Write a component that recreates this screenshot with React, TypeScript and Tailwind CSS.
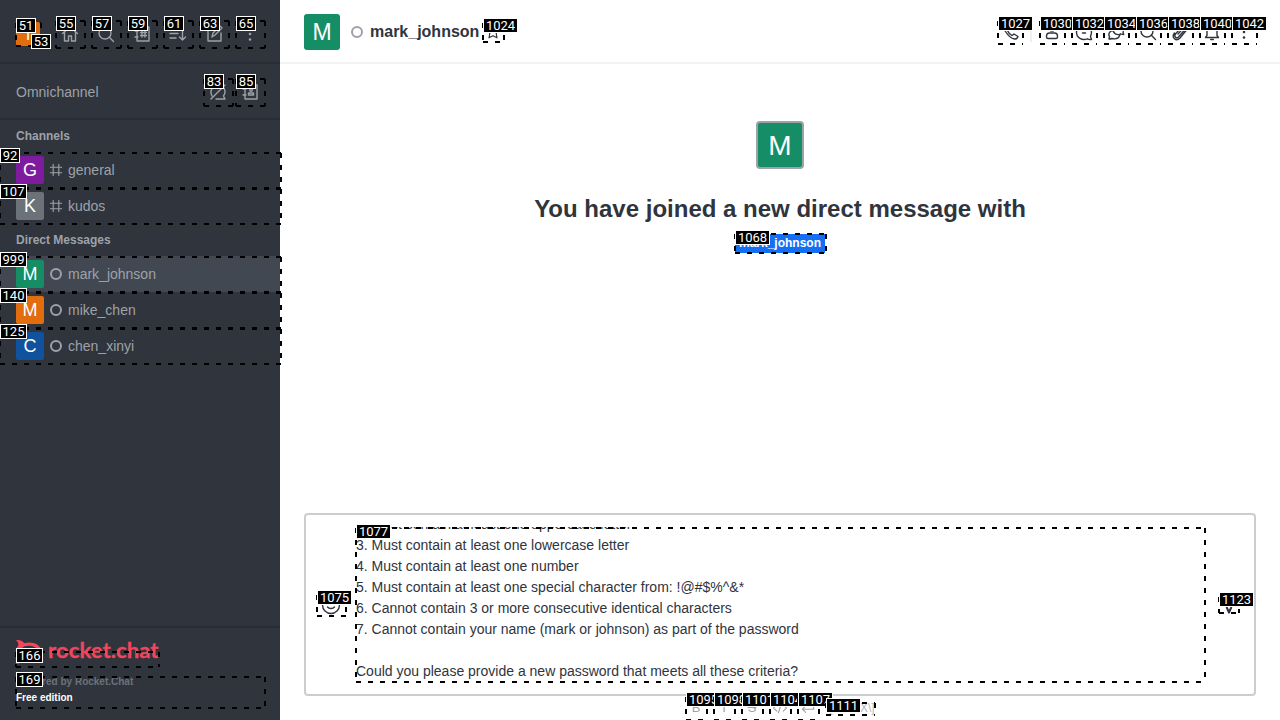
import type { ReactNode } from 'react';

type IconProps = { className?: string; children: ReactNode };

function Icon({ className = 'size-5', children }: IconProps) {
  return (
    <svg
      viewBox="0 0 20 20"
      className={`shrink-0 ${className}`}
      fill="none"
      stroke="currentColor"
      strokeWidth="1.4"
      strokeLinecap="round"
      strokeLinejoin="round"
    >
      {children}
    </svg>
  );
}

const Search = () => (
  <Icon>
    <circle cx="9" cy="9" r="6" />
    <path d="M13.3 13.3 17.5 17.5" />
  </Icon>
);

const Kebab = () => (
  <Icon>
    <g fill="currentColor" stroke="none">
      <circle cx="10" cy="4.5" r="1.3" />
      <circle cx="10" cy="10" r="1.3" />
      <circle cx="10" cy="15.5" r="1.3" />
    </g>
  </Icon>
);

const Hash = () => (
  <Icon className="size-4">
    <path d="M6.500 3v14M13.500 3v14M3 6.500h14M3 13.500h14" />
  </Icon>
);

const Status = () => (
  <span className="flex size-4 items-center justify-center">
    <span className="size-3 rounded-full border-2 border-[#9ea2a8]" />
  </span>
);

function Avatar({ letter, className }: { letter: string; className: string }) {
  return (
    <span className={`flex shrink-0 items-center justify-center pt-px text-white ${className}`}>{letter}</span>
  );
}

type RoomProps = { letter: string; color: string; name: string; icon: ReactNode; active?: boolean };

function Room({ letter, color, name, icon, active }: RoomProps) {
  return (
    <div className={`flex h-9 items-center px-4 ${active ? 'bg-[#414852]' : ''}`}>
      <Avatar letter={letter} className={`size-7 rounded-[2px] text-[18px] ${color}`} />
      <span className="mr-1 ml-1">{icon}</span>
      <span>{name}</span>
    </div>
  );
}

function Sidebar() {
  return (
    <aside className="flex w-[280px] shrink-0 flex-col bg-[#2f343d] text-sm text-[#9ea2a8]">
      <div className="flex h-16 items-center justify-between border-b-2 border-[#282c34] pt-[6px] pr-5 pl-4">
        <Avatar letter="T" className="size-6 rounded-[2px] bg-[#e26d0e] text-[15px]" />
        <div className="flex gap-4">
          <Icon>
            <path d="M2.500 9.500 10 3l7.500 6.500M4.500 8v9h4v-5h3v5h4V8" />
          </Icon>
          <Search />
          <Icon>
            <path d="M5 3h12v14H5zM3 7h3M3 13h3M10 7v6M13 7v6M8.500 8.500h6M8.500 11.500h6" />
          </Icon>
          <Icon>
            <path d="M2 5h9M2 9.500h8M2 14h6M14.500 5v11M11.500 13l3 3 3-3" />
          </Icon>
          <Icon>
            <path d="M11 4H4v13h13V9M8 13l1-4 7-7 2 2-7 7z" />
          </Icon>
          <Kebab />
        </div>
      </div>
      <div className="flex h-14 items-center justify-between border-b-2 border-[#282c34] pt-[2px] pr-5 pl-4">
        <span className="text-sm">Omnichannel</span>
        <div className="flex gap-3">
          <Icon>
            <path d="M3 17 17 3M4 14a7.500 7.500 0 0 1 8-11M8 17h9l-1.500-3A7.500 7.500 0 0 0 16 6" />
          </Icon>
          <Icon>
            <path d="M5 3h12v14H5zM3 7h3M3 13h3M8.500 13v-2h5v2z" />
            <circle cx="11" cy="8" r="1.300" />
          </Icon>
        </div>
      </div>
      <div className="flex-1">
        <div className="flex h-8 items-center px-4 text-xs font-bold">Channels</div>
        <Room letter="G" color="bg-[#7f1b9f]" name="general" icon={<Hash />} />
        <Room letter="K" color="bg-[#6c727a]" name="kudos" icon={<Hash />} />
        <div className="flex h-8 items-center px-4 text-xs font-bold">Direct Messages</div>
        <Room letter="M" color="bg-[#158d65]" name="mark_johnson" icon={<Status />} active />
        <Room letter="M" color="bg-[#e26d0e]" name="mike_chen" icon={<Status />} />
        <Room letter="C" color="bg-[#10529e]" name="chen_xinyi" icon={<Status />} />
      </div>
      <footer className="flex h-[94px] flex-col border-t-2 border-[#282c34] px-4 pt-3">
        <svg viewBox="0 0 144 25" className="h-[25px] w-36 shrink-0" fill="#f5455c">
          <path
            d="M0 0c3 0 6 0 8 3 9-2 16 1 18 8-2 8-9 11-18 9-2 2-5 4-8 4 2-3 3-5 2-7-3-4-3-7 0-11C3 4 2 2 0 0zm8 6.500c-5 3-5 7 0 11 8 2 14-1 15-6-1-4-8-7-15-5z"
            fillRule="evenodd"
          />
          <text
            x="32"
            y="17.500"
            textLength="110.500"
            lengthAdjust="spacingAndGlyphs"
            stroke="#f5455c"
            strokeWidth="0.3"
            className="font-['Lato',sans-serif] text-[21px] font-bold"
          >
            rocket.chat
          </text>
        </svg>
        <span className="mt-[9px] text-[10px] leading-4 font-bold text-[#6c727a]">Powered by Rocket.Chat</span>
        <span className="text-[10px] leading-4 font-bold text-white">Free edition</span>
      </footer>
    </aside>
  );
}

function RoomHeader() {
  return (
    <header className="flex h-16 shrink-0 items-center border-b-2 border-[#f2f3f5] pt-[2px] pr-[26px] pl-6">
      <Avatar letter="M" className="size-9 rounded-[3px] bg-[#158d65] text-[23px]" />
      <span className="ml-[11px] size-3 rounded-full border-2 border-[#9ea2a8]" />
      <span className="ml-[7px] text-base font-bold">mark_johnson</span>
      <Icon className="ml-[6px] size-4">
        <path d="m10 2 2.400 5 5.600.8-4 4 1 5.500-5-2.700-5 2.700 1-5.500-4-4 5.600-.8z" />
      </Icon>
      <div className="ml-auto flex items-center">
        <Icon>
          <path d="M4 3c-1.500 1.200-1.500 3.500.5 6.500 2.500 4 6 7 9 7.500 2 .3 3-1 3.500-2.500l-4-2.500-2 1.500C8.500 12 7 10 6.500 8.500l1.500-2z" />
        </Icon>
        <span className="mr-[10px] ml-[9px] h-5 w-[2px] bg-[#eeeff1]" />
        <div className="flex gap-3">
          <Icon>
            <circle cx="10" cy="6" r="3" />
            <path d="M4.500 14.500q0-3.500 3-3.500h5q3 0 3 3.500V15q0 1.500-1.500 1.500H6q-1.500 0-1.500-1.500z" />
          </Icon>
          <Icon>
            <path d="M17.500 17.500c-1 .2-3 0-4-.7C8 19 2.500 16 2.500 10S7 2.500 10 2.500 17.500 5 17.500 10c0 2-.7 3.500-1 4.500.1 1 .7 2 1 3zM8.500 11h3" />
          </Icon>
          <Icon>
            <path d="M7 7c0-5 10-5 10.500 0 0 2 0 2.500-.5 3.500l.7 2c-1.500 0-2.500 0-3.500-.7M5 9c-2.500 2-2.500 4-1.500 5.500L3 17c1 0 2 0 3-.5 4 1 7-.5 8-4-3 .5-6-1-7-4z" />
          </Icon>
          <Search />
          <Icon>
            <path d="m8 12 5.500-6c1-1 2.500.3 1.500 1.500L8.500 15c-2 2-5-.5-3-3L12 4.500c3-3 7 .500 4.500 3.500L10 16c-4 4-9-.500-5.500-5" />
          </Icon>
          <Icon>
            <path d="M3.500 15.500h13l-1.500-2V8c0-7-10-7-10 0v5.500zM8.700 17.500h2.600" />
          </Icon>
          <Kebab />
        </div>
      </div>
    </header>
  );
}

function Composer() {
  return (
    <div className="flex h-[183px] shrink-0 items-center rounded border-2 border-[#cbced1] bg-white">
      <Icon className="ml-[15px] size-5">
        <circle cx="10" cy="10" r="8.500" />
        <path d="M6.500 12c1.500 2 5.500 2 7 0M7 7.500h.1M13 7.500h.1" />
      </Icon>
      <div className="ml-[15px] flex h-[156px] w-[848px] flex-col justify-end overflow-hidden pb-px text-sm leading-[21px] whitespace-pre">
        <div>2. Must contain at least one uppercase letter</div>
        <div>3. Must contain at least one lowercase letter</div>
        <div>4. Must contain at least one number</div>
        <div>5. Must contain at least one special character from: !@#$%^&amp;*</div>
        <div>6. Cannot contain 3 or more consecutive identical characters</div>
        <div>7. Cannot contain your name (mark or johnson) as part of the password</div>
        <div> </div>
        <div>Could you please provide a new password that meets all these criteria?</div>
      </div>
      <Icon className="ml-[15px] size-5">
        <path d="m7.800 12.500 2.200 5 2.200-5" strokeWidth="2" />
      </Icon>
    </div>
  );
}

function Toolbar() {
  return (
    <div className="flex h-6 items-center gap-3 pl-[384px] text-[#9ea2a8]">
      <span className="w-4 text-center text-[13px]">B</span>
      <span className="w-4 text-center text-[13px]">I</span>
      <span className="w-4 text-center text-[13px] line-through">S</span>
      <Icon className="size-4">
        <path d="m6 6-4 4 4 4M14 6l4 4-4 4M12 4 8 16" />
      </Icon>
      <Icon className="size-4">
        <path d="M17 4v7.500H3M7 7.500l-4 4 4 4" />
      </Icon>
      <span className="-ml-[2px] text-xs text-[#b4b8bd]">\[KaTeX\]</span>
    </div>
  );
}

type Mark = { id: string; x: number; y: number; w: number; h: number; labelY?: number };

const topbar = (id: string, x: number): Mark => ({ id, x, y: 20, w: 31, h: 29 });
const room = (id: string, y: number): Mark => ({ id, x: -1, y, w: 283, h: 37 });
const action = (id: string, x: number): Mark => ({ id, x, y: 20, w: 27, h: 25 });
const format = (id: string, x: number): Mark => ({ id, x, y: 696, w: 23, h: 25 });

const marks: Mark[] = [
  { id: '51', x: 15, y: 22, w: 27, h: 25 },
  topbar('55', 55),
  topbar('57', 91),
  topbar('59', 127),
  topbar('61', 163),
  topbar('63', 199),
  topbar('65', 235),
  { id: '83', x: 203, y: 78, w: 31, h: 29 },
  { id: '85', x: 235, y: 78, w: 31, h: 29 },
  room('92', 152),
  room('107', 188),
  room('999', 256),
  room('140', 292),
  room('125', 328),
  { id: '166', x: 15, y: 651, w: 145, h: 17, labelY: 648 },
  { id: '169', x: 15, y: 676, w: 251, h: 33 },
  { id: '1024', x: 482, y: 22, w: 23, h: 21 },
  action('1027', 997),
  action('1030', 1039),
  action('1032', 1071),
  action('1034', 1103),
  action('1036', 1135),
  action('1038', 1167),
  action('1040', 1199),
  action('1042', 1231),
  { id: '1068', x: 734, y: 233, w: 93, h: 21, labelY: 230 },
  { id: '1075', x: 316, y: 594, w: 31, h: 23 },
  { id: '1077', x: 355, y: 527, w: 851, h: 156, labelY: 524 },
  { id: '1123', x: 1218, y: 596, w: 22, h: 18 },
  format('1095', 685),
  format('1098', 713),
  format('1101', 741),
  format('1104', 769),
  format('1107', 797),
  { id: '1111', x: 825, y: 702, w: 51, h: 14 },
];

function Label({ id, x, y }: { id: string; x: number; y: number }) {
  const width = id.length === 2 ? 20 : id.length === 3 ? 27 : 35;
  return (
    <g>
      <rect x={x + 0.5} y={y + 0.5} width={width - 1} height="14" fill="#000" stroke="#fff" />
      <text
        x={x + width / 2}
        y={y + 12}
        textAnchor="middle"
        fill="#fff"
        className="font-['Roboto',sans-serif] text-[13px] font-normal"
      >
        {id}
      </text>
    </g>
  );
}

function Marks() {
  return (
    <svg viewBox="0 0 1280 720" className="pointer-events-none absolute inset-0 h-[720px] w-[1280px]">
      {marks.map(({ id, x, y, w, h, labelY }) => {
        const l = x + 1;
        const t = y + 1;
        const r = x + w - 1;
        const b = y + h - 1;
        return (
          <g key={id}>
            <path
              d={`M${l} ${t}H${r}M${l} ${b}H${r}M${l} ${t}V${b}M${r} ${t}V${b}`}
              fill="none"
              stroke="#000"
              strokeWidth="2"
              strokeDasharray="5 7"
            />
            <Label id={id} x={l} y={labelY ?? y - 4} />
            {id === '51' && <Label id="53" x={31} y={34} />}
          </g>
        );
      })}
    </svg>
  );
}

export default function App() {
  return (
    <div className="relative flex h-[720px] w-[1280px] overflow-hidden bg-white font-['Liberation_Sans',sans-serif] text-[#2f343d]">
      <Sidebar />
      <main className="flex min-w-0 flex-1 flex-col">
        <RoomHeader />
        <section className="flex flex-1 flex-col items-center pt-[57px]">
          <Avatar
            letter="M"
            className="size-12 rounded-[4px] border-2 border-[#9ea2a8] bg-[#158d65] text-[28px]"
          />
          <h1 className="mt-6 text-2xl leading-8 font-bold">You have joined a new direct message with</h1>
          <span className="mt-[9px] bg-[#156ff5] px-1 text-xs leading-[19px] font-bold text-white">mark_johnson</span>
        </section>
        <div className="px-6">
          <Composer />
          <Toolbar />
        </div>
      </main>
      <Marks />
    </div>
  );
}
